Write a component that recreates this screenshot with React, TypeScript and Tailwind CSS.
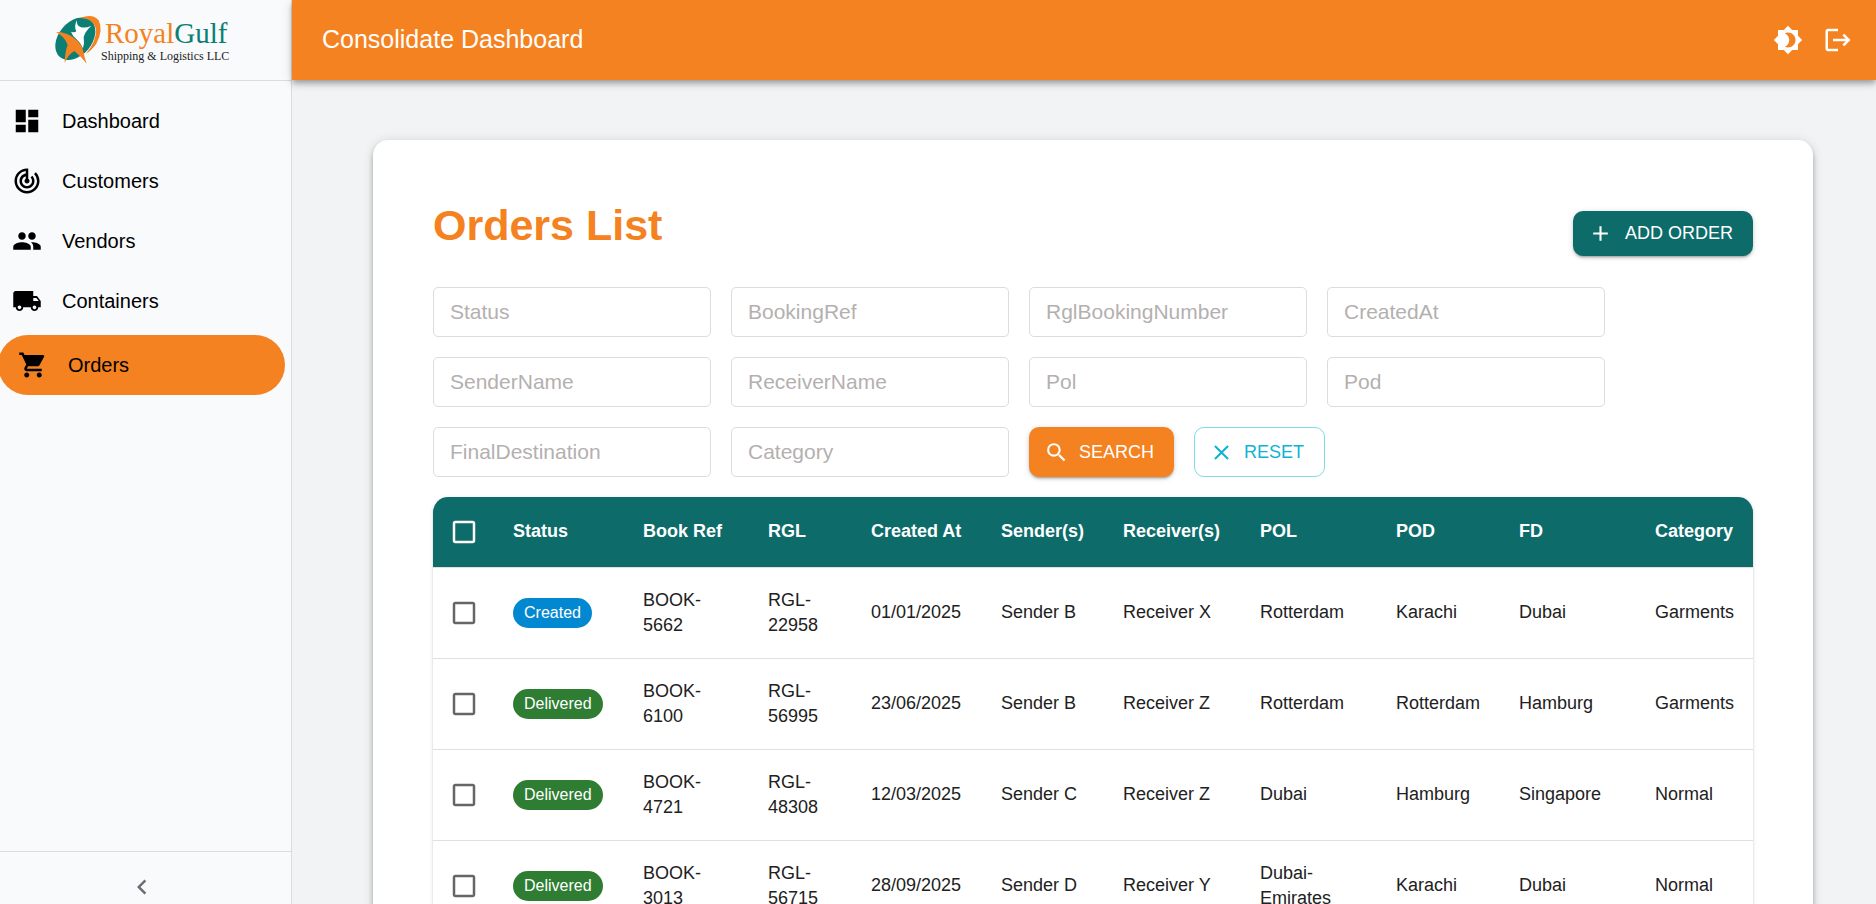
import React from "react";
import {
  MdAdd,
  MdBrightness4,
  MdCheckBox,
  MdCheckBoxOutlineBlank,
  MdChevronLeft,
  MdClose,
  MdDashboard,
  MdLocalShipping,
  MdLogout,
  MdPeople,
  MdSearch,
  MdShoppingCart,
  MdTrackChanges,
} from "react-icons/md";

const navItems = [
  { label: "Dashboard", icon: MdDashboard, active: false },
  { label: "Customers", icon: MdTrackChanges, active: false },
  { label: "Vendors", icon: MdPeople, active: false },
  { label: "Containers", icon: MdLocalShipping, active: false },
  { label: "Orders", icon: MdShoppingCart, active: true },
];

const filters = [
  "Status",
  "BookingRef",
  "RglBookingNumber",
  "CreatedAt",
  "SenderName",
  "ReceiverName",
  "Pol",
  "Pod",
  "FinalDestination",
  "Category",
];

const columns = [
  { label: "Status", width: "w-[130px]" },
  { label: "Book Ref", width: "w-[125px]" },
  { label: "RGL", width: "w-[103px]" },
  { label: "Created At", width: "w-[130px]" },
  { label: "Sender(s)", width: "w-[122px]" },
  { label: "Receiver(s)", width: "w-[137px]" },
  { label: "POL", width: "w-[136px]" },
  { label: "POD", width: "w-[123px]" },
  { label: "FD", width: "w-[136px]" },
  { label: "Category", width: "w-[118px]" },
];

type Order = { status: "Created" | "Delivered"; cells: string[] };

const orders: Order[] = [
  {
    status: "Created",
    cells: ["BOOK-5662", "RGL-22958", "01/01/2025", "Sender B", "Receiver X", "Rotterdam", "Karachi", "Dubai", "Garments"],
  },
  {
    status: "Delivered",
    cells: ["BOOK-6100", "RGL-56995", "23/06/2025", "Sender B", "Receiver Z", "Rotterdam", "Rotterdam", "Hamburg", "Garments"],
  },
  {
    status: "Delivered",
    cells: ["BOOK-4721", "RGL-48308", "12/03/2025", "Sender C", "Receiver Z", "Dubai", "Hamburg", "Singapore", "Normal"],
  },
  {
    status: "Delivered",
    cells: ["BOOK-3013", "RGL-56715", "28/09/2025", "Sender D", "Receiver Y", "Dubai-Emirates", "Karachi", "Dubai", "Normal"],
  },
];

const chipColors = { Created: "bg-[#0288d1]", Delivered: "bg-[#2e7d32]" };

function Logo() {
  return (
    <svg
      viewBox="0 0 180 56"
      className="h-14 w-[180px]"
      role="img"
      aria-label="RoyalGulf Shipping & Logistics LLC"
    >
      <g transform="translate(0 -1) scale(0.3333)">
        <ellipse cx="73" cy="83" rx="72" ry="50" transform="rotate(-50 73 83)" fill="#0c7f75" />
        <path d="M88 21 Q125 6 143 28 Q158 58 136 98 Q122 118 105 128 Q137 90 135 56 Q130 24 88 21Z" fill="#f58220" />
        <path d="M78 28 Q76 45 90 49 Q106 52 121 44 Q102 62 98 78 Q101 95 96 112 Q88 94 76 84 Q65 76 60 62 Q70 66 76 61 Q68 45 78 28Z" fill="#fff" />
        <path d="M15 63 Q46 63 68 80 Q94 98 98 125 Q101 142 107 158 Q90 136 70 120 Q52 130 41 156 Q42 122 50 102 Q42 78 15 63Z" fill="#f58220" />
      </g>
      <text x="54" y="31" fontSize="29" fontFamily="'Liberation Serif', serif">
        <tspan fill="#f58220">Royal</tspan>
        <tspan fill="#0c7f75">Gulf</tspan>
      </text>
      <text x="50" y="48" fontSize="12" fontFamily="'Liberation Serif', serif" fill="#222">
        Shipping &amp; Logistics LLC
      </text>
    </svg>
  );
}

function Checkbox({ label, className }: { label: string; className: string }) {
  return (
    <label className={`relative block size-[30px] ${className}`}>
      <input type="checkbox" aria-label={label} className="peer absolute inset-0 size-full cursor-pointer opacity-0" />
      <MdCheckBoxOutlineBlank className="size-[30px] peer-checked:hidden" />
      <MdCheckBox className="hidden size-[30px] peer-checked:block" />
    </label>
  );
}

function Sidebar() {
  return (
    <aside className="flex w-[292px] shrink-0 flex-col border-r border-[#dadcde] bg-[#f9fafc]">
      <div className="flex h-[81px] shrink-0 items-center justify-center border-b border-[#dadcde] pr-2.5">
        <Logo />
      </div>
      <nav className="flex-1 pt-2.5">
        {navItems.map(({ label, icon: Icon, active }) => (
          <a
            key={label}
            href="#"
            aria-current={active ? "page" : undefined}
            className={`flex h-[60px] items-center gap-5 text-[20px] text-black ${
              active ? "mt-1 mr-1.5 -ml-0.5 rounded-full bg-[#f58220] pl-5" : "pl-3"
            }`}
          >
            <Icon className="size-[30px]" />
            {label}
          </a>
        ))}
      </nav>
      <div className="flex h-[53px] shrink-0 justify-center border-t border-[#dadcde] pt-5 pr-2">
        <button type="button" aria-label="Collapse menu" className="size-[30px] text-[#6b6d70]">
          <MdChevronLeft className="size-[30px]" />
        </button>
      </div>
    </aside>
  );
}

function Filters() {
  return (
    <form className="flex flex-wrap gap-5" onSubmit={(e) => e.preventDefault()}>
      {filters.map((name) => (
        <input
          key={name}
          type="text"
          aria-label={name}
          placeholder={name}
          className="h-[50px] w-[278px] rounded-[5px] border border-[#dcdcdc] px-4 text-[21px] text-[#222] placeholder:text-[#b4b0b0]"
        />
      ))}
      <button
        type="submit"
        className="flex h-[50px] items-center gap-2.5 rounded-[10px] bg-[#f58220] pr-5 pl-[15px] text-[18px] text-white shadow-[0_3px_2px_-2px_rgba(0,0,0,0.2),0_2px_3px_rgba(0,0,0,0.14),0_1px_6px_rgba(0,0,0,0.12)]"
      >
        <MdSearch className="size-[25px]" />
        SEARCH
      </button>
      <button
        type="reset"
        className="flex h-[50px] items-center gap-2.5 rounded-[10px] border border-[#80d9ea] pr-5 pl-[14px] text-[18px] text-[#0fb3d5]"
      >
        <MdClose className="size-[25px]" />
        RESET
      </button>
    </form>
  );
}

function OrdersTable() {
  return (
    <div className="mt-5 overflow-hidden rounded-t-[15px] shadow-[0_3px_1px_-2px_rgba(0,0,0,0.2),0_2px_2px_rgba(0,0,0,0.14),0_1px_4px_rgba(0,0,0,0.12)]">
      <table className="w-full table-fixed border-collapse text-left text-[18px] leading-[25px] text-[#212121]">
        <thead>
          <tr className="h-[70px] border-b border-[#e0e0e0] bg-[#0d6c6a] text-white">
            <th className="w-[60px] p-0 pl-4">
              <Checkbox label="Select all orders" className="text-white" />
            </th>
            {columns.map(({ label, width }) => (
              <th key={label} scope="col" className={`pl-5 font-bold whitespace-nowrap ${width}`}>
                {label}
              </th>
            ))}
          </tr>
        </thead>
        <tbody>
          {orders.map(({ status, cells }) => (
            <tr key={cells[0]} className="h-[91px] border-b border-[#e0e0e0]">
              <td className="p-0 pl-4">
                <Checkbox label={`Select ${cells[0]}`} className="text-[#666]" />
              </td>
              <td className="pl-5">
                <span
                  className={`inline-flex h-[30px] items-center rounded-full px-[11px] align-middle text-[16px] text-white ${chipColors[status]}`}
                >
                  {status}
                </span>
              </td>
              {cells.map((cell, i) => (
                <td key={i} className="px-5 py-5">
                  {cell}
                </td>
              ))}
            </tr>
          ))}
        </tbody>
      </table>
    </div>
  );
}

export default function App() {
  return (
    <div className="flex h-screen overflow-hidden bg-[#f2f3f5] font-['Liberation_Sans',Arial,sans-serif]">
      <Sidebar />
      <div className="flex min-w-0 flex-1 flex-col">
        <header className="relative z-10 flex h-20 shrink-0 items-center justify-between bg-[#f58220] pr-[23px] pl-[30px] text-white shadow-[0_3px_5px_-1px_rgba(0,0,0,0.2),0_5px_6px_rgba(0,0,0,0.14),0_1px_12px_rgba(0,0,0,0.12)]">
          <h1 className="text-[25px]">Consolidate Dashboard</h1>
          <div className="flex gap-5">
            <button type="button" aria-label="Toggle theme">
              <MdBrightness4 className="size-[30px]" />
            </button>
            <button type="button" aria-label="Log out">
              <MdLogout className="size-[30px]" />
            </button>
          </div>
        </header>
        <main className="flex-1 overflow-hidden pt-[60px] pr-[63px] pl-[81px]">
          <section className="rounded-[15px] bg-white p-[60px] shadow-[0_3px_5px_-1px_rgba(0,0,0,0.2),0_5px_6px_rgba(0,0,0,0.14),0_1px_12px_rgba(0,0,0,0.12)]">
            <div className="mb-5 flex items-center justify-between">
              <h2 className="mb-[17px] text-[43px] leading-[50px] font-bold text-[#f58220]">Orders List</h2>
              <button
                type="button"
                className="flex h-[45px] items-center gap-3 rounded-[10px] bg-[#0d6c6a] pr-5 pl-[15px] text-[18px] text-white shadow-[0_3px_2px_-2px_rgba(0,0,0,0.2),0_2px_3px_rgba(0,0,0,0.14),0_1px_6px_rgba(0,0,0,0.12)]"
              >
                <MdAdd className="size-[25px]" />
                ADD ORDER
              </button>
            </div>
            <Filters />
            <OrdersTable />
          </section>
        </main>
      </div>
    </div>
  );
}
